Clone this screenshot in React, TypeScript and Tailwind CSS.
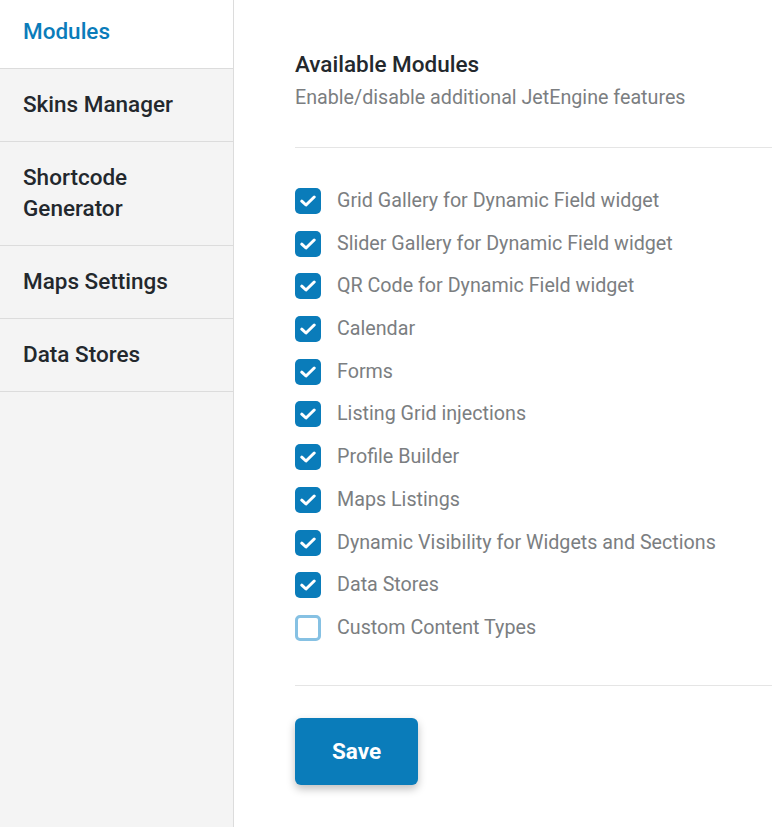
import React, { useState } from "react";

const tabs = ["Modules", "Skins Manager", "Shortcode Generator", "Maps Settings", "Data Stores"];

const initialModules = [
  { name: "Grid Gallery for Dynamic Field widget", on: true },
  { name: "Slider Gallery for Dynamic Field widget", on: true },
  { name: "QR Code for Dynamic Field widget", on: true },
  { name: "Calendar", on: true },
  { name: "Forms", on: true },
  { name: "Listing Grid injections", on: true },
  { name: "Profile Builder", on: true },
  { name: "Maps Listings", on: true },
  { name: "Dynamic Visibility for Widgets and Sections", on: true },
  { name: "Data Stores", on: true },
  { name: "Custom Content Types", on: false },
];

const App: React.FC = () => {
  const [active, setActive] = useState(0);
  const [modules, setModules] = useState(initialModules);

  const toggle = (i: number) => {
    setModules((prev) => prev.map((m, idx) => (idx === i ? { ...m, on: !m.on } : m)));
  };

  return (
    <div className="flex min-h-[827px] bg-white font-['Roboto',sans-serif]">
      {/* Sidebar */}
      <div className="w-[234px] shrink-0 bg-[#f4f4f4] border-r border-[#dcdcdc]">
        {tabs.map((tab, i) => (
          <button
            key={tab}
            onClick={() => setActive(i)}
            className={
              "block w-full text-left px-[23px] text-[22.5px] leading-[31px] font-medium border-b border-[#dcdcdc] " +
              (i === 0 ? "pt-[16px] pb-[21px] " : "pt-[20px] pb-[21px] ") +
              (active === i ? "bg-white text-[#0a7cba] -mr-px w-[calc(100%+1px)]" : "text-[#23282d]")
            }
          >
            {tab === "Shortcode Generator" ? (
              <>
                Shortcode
                <br />
                Generator
              </>
            ) : (
              tab
            )}
          </button>
        ))}
      </div>

      {/* Content */}
      <div className="flex-1 pl-[61px] pt-[50px]">
        <h2 className="text-[22.5px] leading-[28px] font-medium text-[#23282d]">Available Modules</h2>
        <p className="mt-[7px] text-[19.7px] leading-[26px] text-[#7b7e81]">
          Enable/disable additional JetEngine features
        </p>

        <div className="mt-[36px] border-t border-[#e5e5e5]" />

        <div className="pt-[40px] pb-[44px] flex flex-col gap-[16.7px]">
          {modules.map((m, i) => (
            <label key={m.name} className="flex items-center gap-[16px] cursor-pointer">
              <span
                onClick={() => toggle(i)}
                className={
                  "w-[26px] h-[26px] rounded-[5px] flex items-center justify-center shrink-0 " +
                  (m.on ? "bg-[#0a7cba]" : "bg-white border-[3px] border-[#86c1e3]")
                }
              >
                {m.on && (
                  <svg width="16" height="12" viewBox="0 0 16 12">
                    <path
                      d="M1.8 6.2 L6 10 L14.2 2"
                      fill="none"
                      stroke="white"
                      strokeWidth="3"
                      strokeLinecap="round"
                      strokeLinejoin="round"
                    />
                  </svg>
                )}
              </span>
              <span className="text-[19.7px] leading-[26px] text-[#7b7e81]">{m.name}</span>
            </label>
          ))}
        </div>

        <div className="border-t border-[#e5e5e5]" />

        <button className="mt-[32px] w-[123px] h-[67px] rounded-[6px] bg-[#0a7cba] text-white text-[22.5px] font-bold shadow-[0_4px_8px_rgba(0,0,0,0.25)]">
          Save
        </button>
      </div>
    </div>
  );
};

export default App;
